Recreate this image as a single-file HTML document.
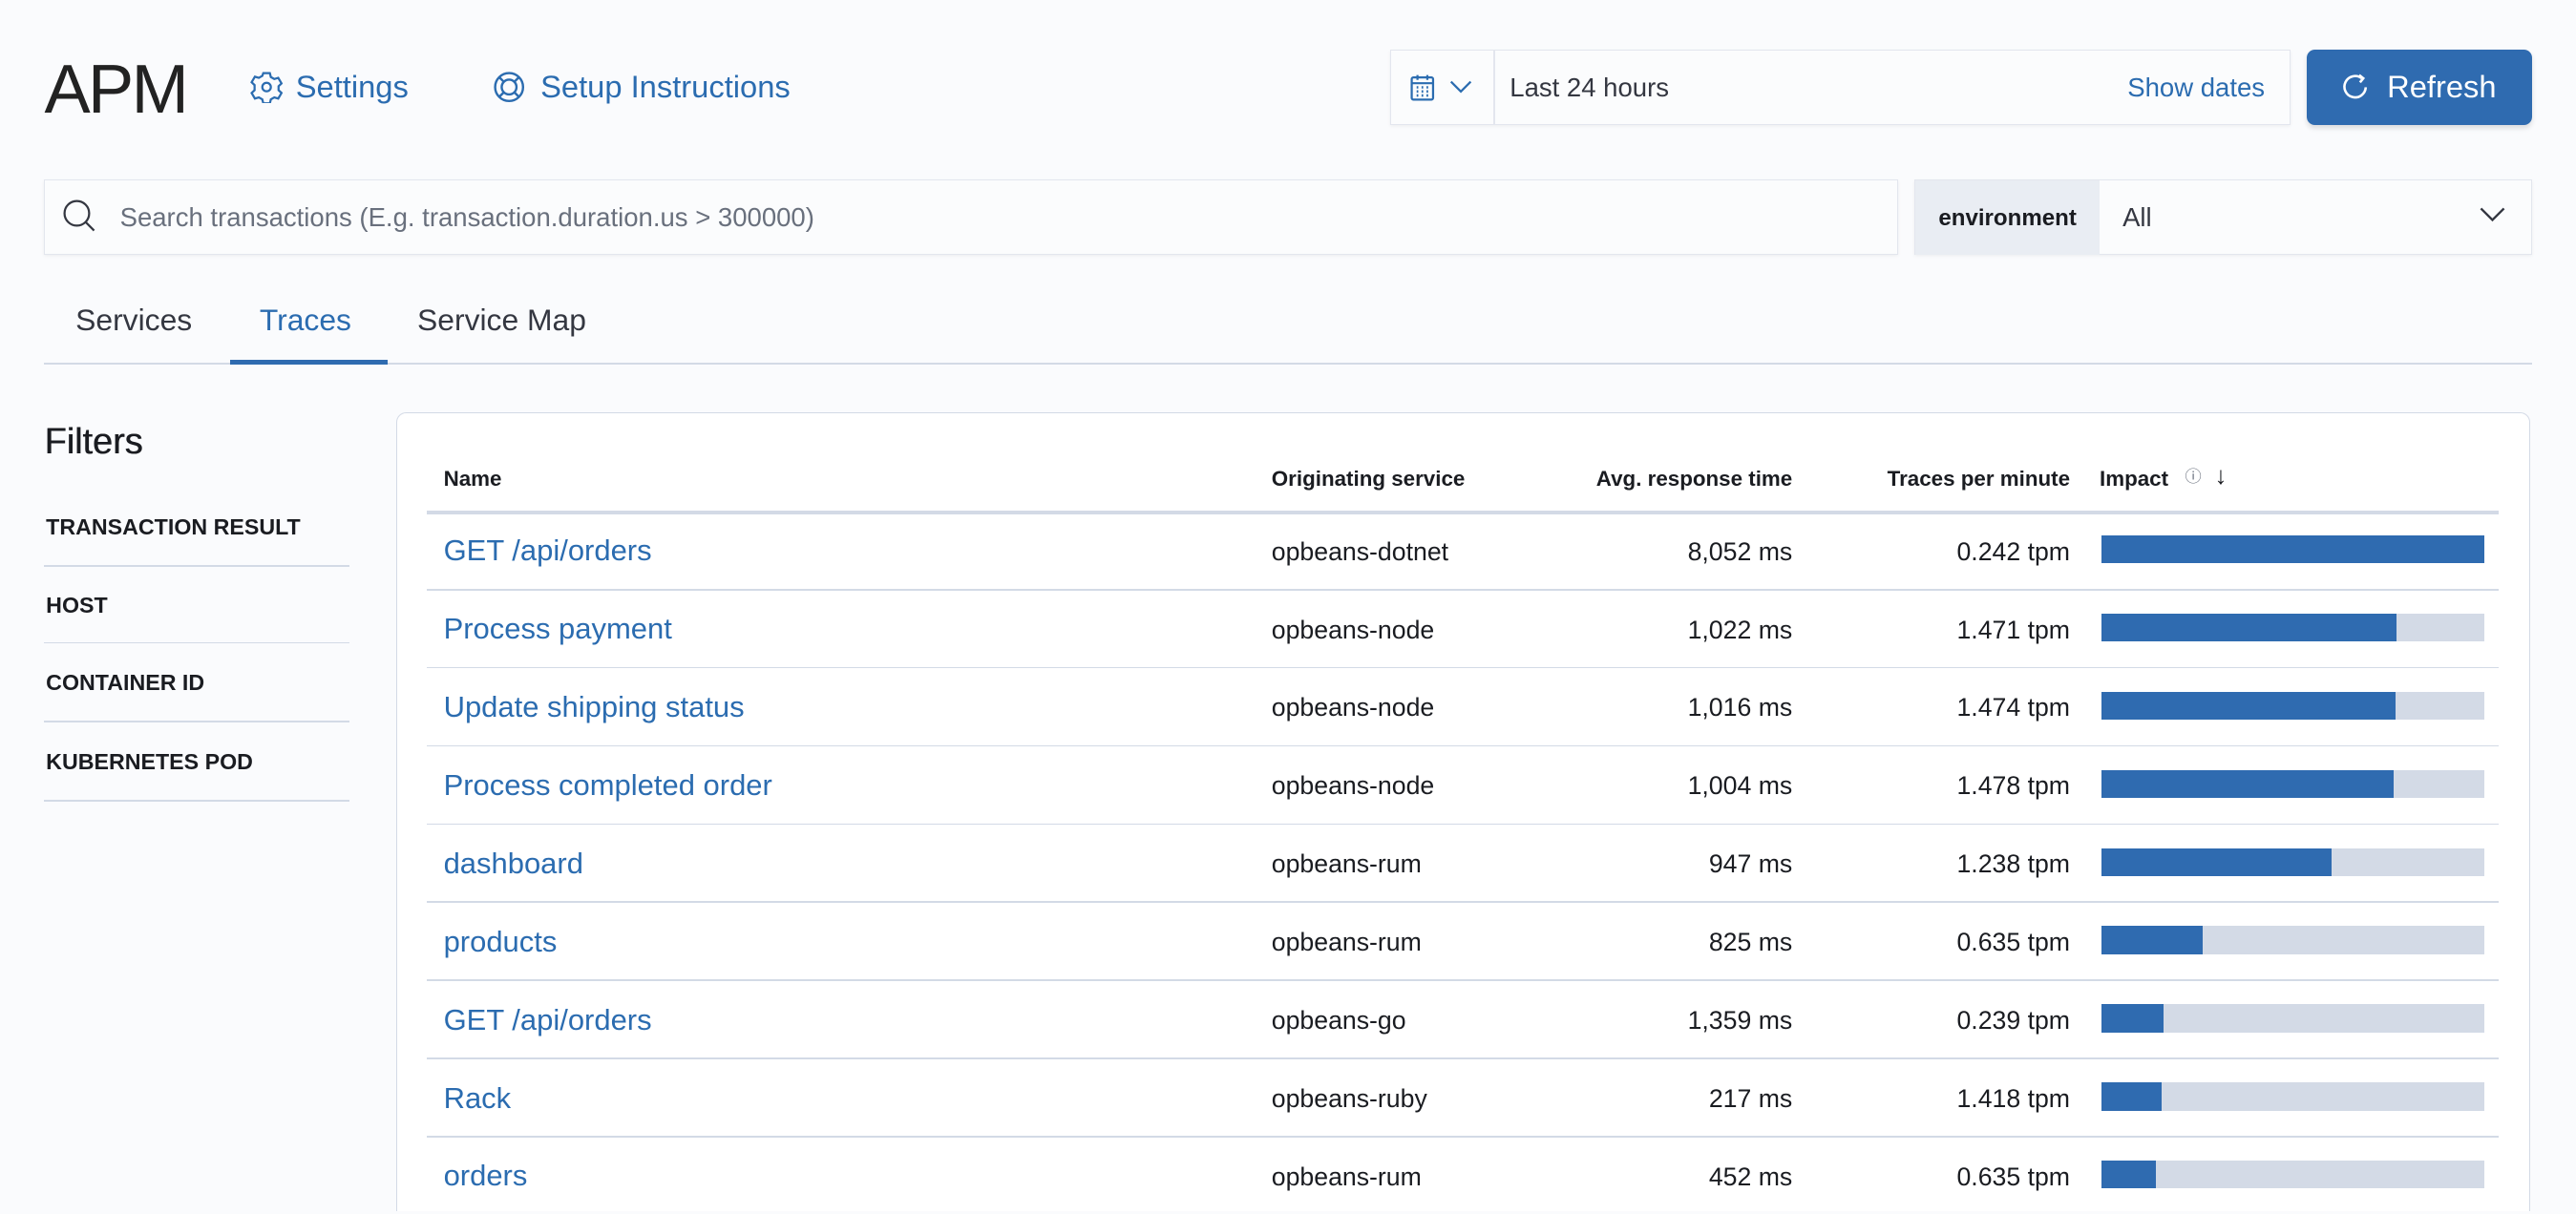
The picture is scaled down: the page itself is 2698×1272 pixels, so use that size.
<!DOCTYPE html>
<html><head><meta charset="utf-8"><style>
html,body{margin:0;padding:0;background:#fafbfd;}
body{width:2698px;height:1272px;overflow:hidden;}
#z{zoom:1.72066;width:1568px;height:739px;position:relative;overflow:hidden;font-family:"Liberation Sans",sans-serif;color:#1a1c21;}
.a{position:absolute;white-space:nowrap;}
.blue{color:#2b6cb0;}
.box{position:absolute;background:#fbfcfd;border:1px solid #e3e6ee;box-shadow:0 1px 2px rgba(0,0,0,.06);}
.hl{position:absolute;height:1px;background:#d3dae6;}
.th{font-size:13px;font-weight:bold;top:284px;}
.row{font-size:15.5px;}
.bar{position:absolute;left:1279px;width:233px;height:17px;background:#d3dae6;}
.bar i{display:block;height:100%;background:#2f6bb0;}
</style></head><body><div id="z">
<div class="a" style="left:27px;top:31px;font-size:42px;font-weight:300;letter-spacing:-1.5px;color:#222">APM</div>
<svg class="a" style="left:152px;top:43px" width="20" height="20" viewBox="0 0 20 20" fill="none" stroke="#2b6cb0" stroke-width="1.3"><path d="M8 1.5h4l.6 2.4 2.1 1.2 2.4-.7 2 3.4-1.8 1.7v2.4l1.8 1.7-2 3.4-2.4-.7-2.1 1.2-.6 2.4H8l-.6-2.4-2.1-1.2-2.4.7-2-3.4 1.8-1.7V8.8L.9 7.1l2-3.4 2.4.7 2.1-1.2z"/><circle cx="10" cy="10" r="2.6"/></svg>
<div class="a blue" style="left:180px;top:42px;font-size:19px;">Settings</div>
<svg class="a" style="left:300px;top:43px" width="20" height="20" viewBox="0 0 20 20" fill="none" stroke="#2b6cb0" stroke-width="1.4"><circle cx="10" cy="10" r="8.5"/><circle cx="10" cy="10" r="4.5"/><path d="M4 4l3 3M16 4l-3 3M4 16l3-3M16 16l-3-3"/></svg>
<div class="a blue" style="left:329px;top:42px;font-size:19px;">Setup Instructions</div>

<div class="box" style="left:846px;top:30px;width:547px;height:45px;"></div>
<div class="a" style="left:909px;top:31px;width:1px;height:45px;background:#e3e6ee"></div>
<svg class="a" style="left:858px;top:44px" width="18" height="18" viewBox="0 0 18 18" fill="none" stroke="#2b6cb0" stroke-width="1.3"><rect x="1.5" y="3" width="13" height="13.5" rx="1"/><path d="M1.5 6.5h13M5 1.5v3M11 1.5v3"/><path d="M4.5 9h1M7.5 9h1M10.5 9h1M4.5 11.5h1M7.5 11.5h1M10.5 11.5h1M4.5 14h1M7.5 14h1M10.5 14h1" stroke-width="1.5"/></svg>
<svg class="a" style="left:882px;top:48px" width="14" height="10" viewBox="0 0 14 10" fill="none" stroke="#2b6cb0" stroke-width="1.3"><path d="M1 1.5l6 6 6-6"/></svg>
<div class="a" style="left:919px;top:44px;font-size:16px;color:#343741">Last 24 hours</div>
<div class="a blue" style="left:1295px;top:44px;font-size:16px;">Show dates</div>
<div class="a" style="left:1404px;top:30px;width:137px;height:46px;background:#2f6bb0;border-radius:5px;box-shadow:0 2px 3px rgba(0,0,0,.12)"></div>
<svg class="a" style="left:1425px;top:44px" width="18" height="18" viewBox="0 0 18 18" fill="none" stroke="#fff" stroke-width="1.5"><path d="M12.5 3.5A6.5 6.5 0 1 0 15 9"/><path d="M11 1.5l2.5 2-2 2.5"/></svg>
<div class="a" style="left:1453px;top:42px;font-size:19px;color:#fff;">Refresh</div>

<div class="box" style="left:27px;top:109px;width:1127px;height:45px;"></div>
<svg class="a" style="left:38px;top:121px" width="22" height="22" viewBox="0 0 22 22" fill="none" stroke="#343741" stroke-width="1.3"><circle cx="9" cy="9" r="7.5"/><path d="M14.5 14.5l5 5"/></svg>
<div class="a" style="left:73px;top:123px;font-size:16px;color:#69707d">Search transactions (E.g. transaction.duration.us &gt; 300000)</div>
<div class="box" style="left:1165px;top:109px;width:375px;height:45px;"></div>
<div class="a" style="left:1166px;top:110px;width:112px;height:45px;background:#e9edf3"></div>
<div class="a" style="left:1180px;top:125px;font-size:14px;font-weight:bold;">environment</div>
<div class="a" style="left:1292px;top:123px;font-size:16px;color:#343741">All</div>
<svg class="a" style="left:1508px;top:125px" width="18" height="12" viewBox="0 0 18 12" fill="none" stroke="#343741" stroke-width="1.4"><path d="M2 2l7 7 7-7"/></svg>

<div class="a" style="left:46px;top:184px;font-size:18.5px;color:#343741">Services</div>
<div class="a blue" style="left:158px;top:184px;font-size:18.5px;">Traces</div>
<div class="a" style="left:254px;top:184px;font-size:18.5px;color:#343741">Service Map</div>
<div class="hl" style="left:27px;top:221px;width:1514px;"></div>
<div class="a" style="left:140px;top:219px;width:96px;height:3px;background:#2f6bb0"></div>

<div class="a" style="left:27px;top:257px;font-size:22px;font-weight:500;text-shadow:0.3px 0 0 #1a1c21">Filters</div>
<div class="a" style="left:28px;top:313px;font-size:13.5px;font-weight:bold;">TRANSACTION RESULT</div>
<div class="hl" style="left:27px;top:344px;width:186px;"></div>
<div class="a" style="left:28px;top:361px;font-size:13.5px;font-weight:bold;">HOST</div>
<div class="hl" style="left:27px;top:391px;width:186px;"></div>
<div class="a" style="left:28px;top:408px;font-size:13.5px;font-weight:bold;">CONTAINER ID</div>
<div class="hl" style="left:27px;top:439px;width:186px;"></div>
<div class="a" style="left:28px;top:456px;font-size:13.5px;font-weight:bold;">KUBERNETES POD</div>
<div class="hl" style="left:27px;top:487px;width:186px;"></div>

<div class="a" style="left:241px;top:251px;width:1298px;height:486px;background:#fff;border:1px solid #d3dae6;border-bottom:none;border-radius:6px 6px 0 0;"></div>
<div class="a th" style="left:270px;">Name</div>
<div class="a th" style="left:774px;">Originating service</div>
<div class="a th" style="right:477px;">Avg. response time</div>
<div class="a th" style="right:308px;">Traces per minute</div>
<div class="a th" style="left:1278px;">Impact</div>
<div class="a" style="left:1330px;top:282px;font-size:10px;color:#69707d">ⓘ</div>
<div class="a" style="left:1348px;top:282px;font-size:15px;">↓</div>
<div class="hl" style="left:260px;top:311px;width:1261px;height:2px;"></div>

<div id="rows"></div>
<script>
var d=[["GET /api/orders","opbeans-dotnet","8,052 ms","0.242 tpm",233],
["Process payment","opbeans-node","1,022 ms","1.471 tpm",180],
["Update shipping status","opbeans-node","1,016 ms","1.474 tpm",179],
["Process completed order","opbeans-node","1,004 ms","1.478 tpm",178],
["dashboard","opbeans-rum","947 ms","1.238 tpm",140],
["products","opbeans-rum","825 ms","0.635 tpm",62],
["GET /api/orders","opbeans-go","1,359 ms","0.239 tpm",38],
["Rack","opbeans-ruby","217 ms","1.418 tpm",37],
["orders","opbeans-rum","452 ms","0.635 tpm",33]];
var h="";
d.forEach(function(r,i){var c=335+i*47.6;
h+='<div class="a blue" style="left:270px;top:'+(c-10)+'px;font-size:18px">'+r[0]+'</div>';
h+='<div class="a row" style="left:774px;top:'+(c-8)+'px">'+r[1]+'</div>';
h+='<div class="a row" style="right:477px;top:'+(c-8)+'px">'+r[2]+'</div>';
h+='<div class="a row" style="right:308px;top:'+(c-8)+'px">'+r[3]+'</div>';
h+='<div class="bar" style="top:'+(c-9)+'px"><i style="width:'+r[4]+'px"></i></div>';
if(i<8)h+='<div class="hl" style="left:260px;top:'+(c+23.5)+'px;width:1261px"></div>';});
document.getElementById("rows").innerHTML=h;
</script>
</div></body></html>
